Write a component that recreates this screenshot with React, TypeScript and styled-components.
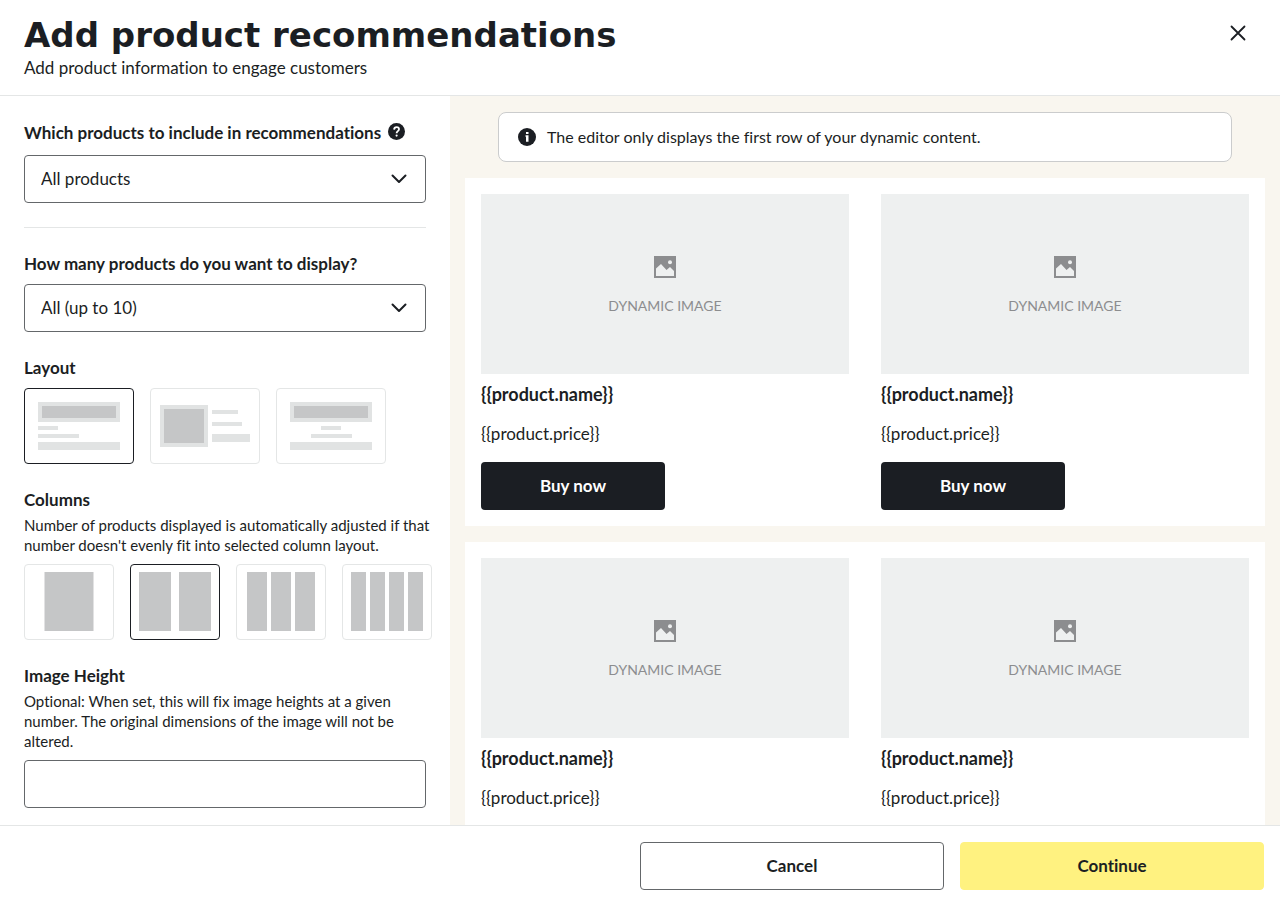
import React, { useState } from 'react';
import styled, { createGlobalStyle } from 'styled-components';

const ink = '#1b1e23';
const line = '#e4e6e6';
const control = '#64676a';
const pale = '#e1e3e3';
const mid = '#c5c6c7';

const GlobalStyle = createGlobalStyle`
  *, *::before, *::after { box-sizing: border-box; }
  body { margin: 0; background: #fff; }
  body, button, input, select {
    font-family: Lato, "Liberation Sans", sans-serif;
    font-size: 17px;
    line-height: 24px;
    font-variant-ligatures: none;
    color: ${ink};
  }
`;

const Dialog = styled.main`
  display: flex;
  flex-direction: column;
  height: 100vh;
  overflow: hidden;
`;

const Header = styled.header`
  display: flex;
  justify-content: space-between;
  align-items: flex-start;
  flex: none;
  padding: 15px 24px;
  border-bottom: 1px solid ${line};
`;

const Title = styled.h1`
  margin: 0;
  font: bold 34px/40px "DejaVu Sans", sans-serif;
`;

const Subtitle = styled.p`
  margin: 1px 0 0;
`;

const CloseButton = styled.button`
  display: flex;
  margin: 0;
  padding: 10px;
  border: 0;
  background: none;
`;

const Body = styled.div`
  display: flex;
  flex: 1;
  min-height: 0;
`;

const Settings = styled.form`
  flex: none;
  width: 450px;
  padding: 24px 16px 17px 24px;
  overflow-y: auto;
  scrollbar-width: none;
`;

const Field = styled.div`
  display: flex;
  flex-direction: column;
  gap: 8px;
  margin: 0 8px 24px 0;
`;

const LabelRow = styled.div`
  display: flex;
  gap: 7px;
  padding: 1px 0 2px;
`;

const Label = styled.label`
  font-weight: bold;
`;

const HelpButton = styled.button`
  display: flex;
  align-items: center;
  height: 20px;
  padding: 0;
  border: 0;
  background: none;
`;

const SelectBox = styled.div`
  display: grid;
  align-items: center;

  > * { grid-area: 1 / 1; }
  > svg { justify-self: end; margin-right: 19px; pointer-events: none; }
`;

const Select = styled.select`
  appearance: none;
  width: 100%;
  height: 48px;
  padding: 0 48px 0 16px;
  border: 1px solid ${control};
  border-radius: 4px;
  background: #fff;
`;

const TextInput = styled.input`
  width: 100%;
  height: 48px;
  margin-top: 8px;
  padding: 0 16px;
  border: 1px solid ${control};
  border-radius: 4px;
  background: #fff;
`;

const Divider = styled.hr`
  height: 1px;
  margin: 0 8px 24px 0;
  border: 0;
  background: ${line};
`;

const Group = styled.fieldset`
  min-width: 0;
  margin: 0 0 24px;
  padding: 0;
  border: 0;
`;

const Legend = styled.legend`
  padding: 0;
  font-weight: bold;
`;

const Hint = styled.p`
  margin: 0;
  padding: 3px 0 1px;
  font-size: 15px;
  line-height: 20px;
`;

const Options = styled.div`
  display: flex;
  gap: 16px;
  margin-top: 8px;
`;

const Option = styled.label<{ $size: 'wide' | 'narrow' }>`
  display: grid;
  width: ${p => (p.$size === 'wide' ? 110 : 90)}px;
  height: 76px;
  border: 1px solid ${line};
  border-radius: 4px;
  cursor: pointer;

  > * { grid-area: 1 / 1; }
  &:has(:checked) { border-color: ${ink}; }
  &:has(:focus-visible) { outline: 2px solid #6a93ff; }
`;

const HiddenRadio = styled.input`
  appearance: none;
  margin: 0;
`;

const Preview = styled.section`
  flex: 1;
  min-width: 0;
  padding: 16px 15px;
  overflow-y: auto;
  scrollbar-width: none;
  background: #f9f6ef;
`;

const Notice = styled.p`
  display: flex;
  align-items: center;
  gap: 11px;
  height: 50px;
  margin: 0 33px 16px;
  padding: 0 19px;
  border: 1px solid #cbcccd;
  border-radius: 8px;
  background: #fff;
  font-size: 16px;
`;

const ProductRow = styled.div`
  display: grid;
  grid-template-columns: 1fr 1fr;
  gap: 32px;
  margin-bottom: 16px;
  padding: 16px;
  background: #fff;
`;

const ImagePlaceholder = styled.div`
  display: flex;
  flex-direction: column;
  align-items: center;
  justify-content: center;
  gap: 16px;
  height: 180px;
  padding-top: 5px;
  background: #eef0f0;
  color: #8c8d8f;
  font-size: 14px;
`;

const ProductName = styled.h2`
  margin: 8px 0 16px;
  font-size: 18px;
  line-height: 24px;
`;

const ProductPrice = styled.p`
  margin: 0 0 16px;
`;

const BuyButton = styled.button`
  width: 50%;
  height: 48px;
  border: 0;
  border-radius: 4px;
  background: ${ink};
  color: #fff;
  font-weight: bold;
`;

const Footer = styled.footer`
  display: flex;
  justify-content: flex-end;
  flex: none;
  padding: 16px 16px 7px 0;
  border-top: 1px solid ${line};
`;

const Actions = styled.div`
  display: grid;
  grid-template-columns: 1fr 1fr;
  gap: 16px;
  width: calc(50% - 8px);
`;

const ActionButton = styled.button<{ $primary?: boolean }>`
  height: 48px;
  border: 1px solid ${p => (p.$primary ? '#fff280' : control)};
  border-radius: 4px;
  background: ${p => (p.$primary ? '#fff280' : '#fff')};
  font-weight: bold;
`;

const CloseIcon = () => (
  <svg width="16" height="16" viewBox="0 0 16 16" aria-hidden="true">
    <path d="M1.5 1.5l13 13M14.5 1.5l-13 13" fill="none" stroke={ink} strokeWidth="1.8" strokeLinecap="round" />
  </svg>
);

const HelpIcon = () => (
  <svg width="17" height="17" viewBox="0 0 17 17" aria-hidden="true">
    <circle cx="8.5" cy="8.5" r="8.5" fill={ink} />
    <path d="M6.1 6.6C6.2 5 7.2 4.2 8.6 4.2c1.4 0 2.4.9 2.4 2.1 0 1.9-2.4 1.8-2.4 3.9" fill="none" stroke="#fff" strokeWidth="1.8" />
    <circle cx="8.6" cy="12.6" r="1.1" fill="#fff" />
  </svg>
);

const InfoIcon = () => (
  <svg width="18" height="18" viewBox="0 0 18 18" aria-hidden="true">
    <circle cx="9" cy="9" r="9" fill={ink} />
    <path d="M8 4h2.5v2H8zM7.500 7.200h3v6.600H8V8.700h-.5z" fill="#fff" />
  </svg>
);

const ChevronIcon = () => (
  <svg width="16" height="10" viewBox="0 0 16 10" aria-hidden="true">
    <path d="M1.5 1.5L8 8l6.500-6.500" fill="none" stroke={ink} strokeWidth="2" strokeLinecap="round" strokeLinejoin="round" />
  </svg>
);

const PictureIcon = () => (
  <svg width="22" height="22" viewBox="0 0 22 22" aria-hidden="true">
    <rect width="22" height="22" fill="#8c8d8f" />
    <circle cx="16" cy="6.200" r="2" fill="#eef0f0" />
    <path d="M2 20v-7.500L7 8l5.500 6 3.500-3 4 4v5z" fill="#eef0f0" />
  </svg>
);

type Bar = [x: number, y: number, w: number, h: number, fill: string];

const layouts: { name: string; bars: Bar[] }[] = [
  {
    name: 'Image on top, text left',
    bars: [[13, 13, 82, 20, pale], [17, 17, 74, 12, mid], [13, 37, 20, 4, pale], [13, 45, 41, 4, pale], [13, 53, 82, 8, pale]],
  },
  {
    name: 'Image beside text',
    bars: [[9, 16, 48, 42, pale], [13, 20, 40, 34, mid], [61, 21, 26, 4, pale], [61, 33, 30, 4, pale], [61, 45, 38, 8, pale]],
  },
  {
    name: 'Image on top, text centered',
    bars: [[13, 13, 82, 20, pale], [17, 17, 74, 12, mid], [44, 37, 20, 4, pale], [34, 45, 41, 4, pale], [13, 53, 82, 8, pale]],
  },
];

const columns: Bar[][] = [
  [[19.5, 7, 49, 59, mid]],
  [[8, 7, 32, 59, mid], [48, 7, 32, 59, mid]],
  [[10, 7, 20, 59, mid], [34, 7, 20, 59, mid], [58, 7, 20, 59, mid]],
  [[8, 7, 15, 59, mid], [27, 7, 15, 59, mid], [46, 7, 15, 59, mid], [65, 7, 15, 59, mid]],
];

const Thumbnail = ({ width, bars }: { width: number; bars: Bar[] }) => (
  <svg width={width} height="74" aria-hidden="true">
    {bars.map(([x, y, w, h, fill], i) => (
      <rect key={i} x={x} y={y} width={w} height={h} fill={fill} />
    ))}
  </svg>
);

const Product = () => (
  <article>
    <ImagePlaceholder>
      <PictureIcon />
      DYNAMIC IMAGE
    </ImagePlaceholder>
    <ProductName>{'{{product.name}}'}</ProductName>
    <ProductPrice>{'{{product.price}}'}</ProductPrice>
    <BuyButton type="button">Buy now</BuyButton>
  </article>
);

export default function App() {
  const [layout, setLayout] = useState(0);
  const [columnCount, setColumnCount] = useState(2);

  return (
    <Dialog>
      <GlobalStyle />
      <Header>
        <div>
          <Title>Add product recommendations</Title>
          <Subtitle>Add product information to engage customers</Subtitle>
        </div>
        <CloseButton type="button" aria-label="Close">
          <CloseIcon />
        </CloseButton>
      </Header>

      <Body>
        <Settings>
          <Field>
            <LabelRow>
              <Label htmlFor="products">Which products to include in recommendations</Label>
              <HelpButton type="button" aria-label="Help">
                <HelpIcon />
              </HelpButton>
            </LabelRow>
            <SelectBox>
              <Select id="products">
                <option>All products</option>
              </Select>
              <ChevronIcon />
            </SelectBox>
          </Field>
          <Divider />
          <Field>
            <Label htmlFor="count">How many products do you want to display?</Label>
            <SelectBox>
              <Select id="count">
                <option>All (up to 10)</option>
              </Select>
              <ChevronIcon />
            </SelectBox>
          </Field>
          <Group>
            <Legend>Layout</Legend>
            <Options>
              {layouts.map((item, i) => (
                <Option key={item.name} $size="wide">
                  <HiddenRadio
                    type="radio"
                    name="layout"
                    aria-label={item.name}
                    checked={layout === i}
                    onChange={() => setLayout(i)}
                  />
                  <Thumbnail width={108} bars={item.bars} />
                </Option>
              ))}
            </Options>
          </Group>
          <Group>
            <Legend>Columns</Legend>
            <Hint>
              Number of products displayed is automatically adjusted if that number doesn't evenly fit into selected
              column layout.
            </Hint>
            <Options>
              {columns.map((bars, i) => (
                <Option key={i} $size="narrow">
                  <HiddenRadio
                    type="radio"
                    name="columns"
                    aria-label={`Columns: ${i + 1}`}
                    checked={columnCount === i + 1}
                    onChange={() => setColumnCount(i + 1)}
                  />
                  <Thumbnail width={88} bars={bars} />
                </Option>
              ))}
            </Options>
          </Group>
          <Field>
            <div>
              <Label htmlFor="height">Image Height</Label>
              <Hint id="height-hint">
                Optional: When set, this will fix image heights at a given number. The original dimensions of the image
                will not be altered.
              </Hint>
              <TextInput id="height" type="text" aria-describedby="height-hint" />
            </div>
          </Field>
        </Settings>

        <Preview>
          <Notice>
            <InfoIcon />
            The editor only displays the first row of your dynamic content.
          </Notice>
          <ProductRow>
            <Product />
            <Product />
          </ProductRow>
          <ProductRow>
            <Product />
            <Product />
          </ProductRow>
        </Preview>
      </Body>

      <Footer>
        <Actions>
          <ActionButton type="button">Cancel</ActionButton>
          <ActionButton type="button" $primary>
            Continue
          </ActionButton>
        </Actions>
      </Footer>
    </Dialog>
  );
}
